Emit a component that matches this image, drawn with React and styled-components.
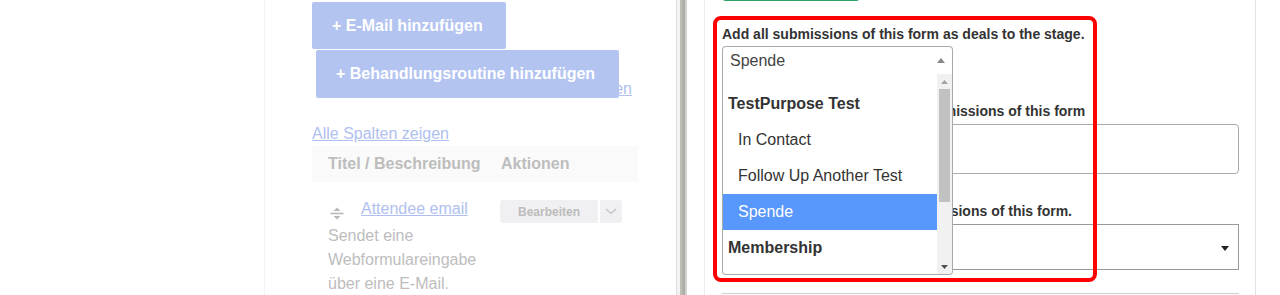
import React from 'react'
import styled, { createGlobalStyle } from 'styled-components'

const GlobalStyle = createGlobalStyle`
  html, body {
    margin: 0;
    padding: 0;
    background: #fff;
  }
  body {
    font-family: "Liberation Sans", Arial, sans-serif;
    overflow: hidden;
  }
`

const stages = [
  { label: 'TestPurpose Test', group: true },
  { label: 'In Contact' },
  { label: 'Follow Up Another Test' },
  { label: 'Spende', active: true },
  { label: 'Membership', group: true },
]

export default function App() {
  return (
    <>
      <GlobalStyle />
      <Page>
        <Gutter />
        <LeftPanel>
          <GhostButton>+ E-Mail hinzufügen</GhostButton>
          <LinkRow>
            <FadedLink href="#">Vorlage hinzufügen</FadedLink>
            <DraggedButton>+ Behandlungsroutine hinzufügen</DraggedButton>
          </LinkRow>
          <ColumnsLink href="#">Alle Spalten zeigen</ColumnsLink>
          <TableHead>
            <TitleCell>Titel / Beschreibung</TitleCell>
            <ActionCell>Aktionen</ActionCell>
          </TableHead>
          <TableRow>
            <TitleCell>
              <TitleLine>
                <SortIcon />
                <TitleLink href="#">Attendee email</TitleLink>
              </TitleLine>
              <Description>Sendet eine Webformulareingabe über eine E-Mail.</Description>
            </TitleCell>
            <ActionCell>
              <SplitButton>
                <EditButton>Bearbeiten</EditButton>
                <CaretButton>
                  <svg width="12" height="7" viewBox="0 0 12 7">
                    <path d="M1 1l5 4.5L11 1" fill="none" stroke="#c6c6c8" strokeWidth="1.5" />
                  </svg>
                </CaretButton>
              </SplitButton>
            </ActionCell>
          </TableRow>
        </LeftPanel>

        <Divider>
          <DividerEdge />
          <DividerGap />
          <DividerBar />
          <DividerShade />
        </Divider>

        <RightPanel>
          <SaveButton />
          <Field $first>
            <Label>Add all submissions of this form as deals to the stage.</Label>
            <OpenSelect>
              Spende
              <ArrowUp />
            </OpenSelect>
          </Field>
          <Field>
            <Label>Add the contact person of all submissions of this form</Label>
            <TextBox />
          </Field>
          <Field>
            <Label>Add the organization of all submissions of this form.</Label>
            <PlainSelect>
              <ArrowDown />
            </PlainSelect>
          </Field>
          <NextField />

          <Dropdown>
            <OptionList>
              {stages.map((s) => (
                <Option key={s.label} $group={s.group} $active={s.active}>
                  {s.label}
                </Option>
              ))}
            </OptionList>
            <Scrollbar>
              <ScrollArrow>
                <svg width="7" height="4" viewBox="0 0 7 4">
                  <path d="M0 4L3.5 0L7 4z" fill="#a3a3a3" />
                </svg>
              </ScrollArrow>
              <Thumb />
              <ScrollArrow $bottom>
                <svg width="7" height="4" viewBox="0 0 7 4">
                  <path d="M0 0L7 0L3.5 4z" fill="#505050" />
                </svg>
              </ScrollArrow>
            </Scrollbar>
          </Dropdown>

          <Highlight />
        </RightPanel>
      </Page>
    </>
  )
}

function SortIcon() {
  return (
    <SortSvg width="14" height="13" viewBox="0 0 14 13">
      <path d="M3.5 4L7 0.5L10.5 4z" fill="#b8b8b8" />
      <path d="M0.5 6.5H13.5" stroke="#b8b8b8" strokeWidth="1.6" />
      <path d="M3.5 9L10.5 9L7 12.5z" fill="#b8b8b8" />
    </SortSvg>
  )
}

const Page = styled.div`
  display: flex;
  height: 295px;
  overflow: hidden;
  background: #fff;
`

const Gutter = styled.div`
  width: 264px;
  flex-shrink: 0;
`

const LeftPanel = styled.div`
  width: 412px;
  flex-shrink: 0;
  box-sizing: border-box;
  border-left: 1px solid #f3f3f3;
  padding: 2px 38px 0 47px;
`

const GhostButton = styled.div`
  display: inline-block;
  height: 47px;
  line-height: 47px;
  padding: 0 23px 0 20px;
  border-radius: 2px;
  background: #b3c4f0;
  color: #fff;
  font-size: 16px;
  font-weight: bold;
  white-space: nowrap;
`

const LinkRow = styled.div`
  position: relative;
  height: 48px;
  margin-top: 1px;
  display: flex;
  justify-content: flex-end;
  align-items: flex-end;
  padding-right: 6px;
`

const DraggedButton = styled(GhostButton)`
  position: absolute;
  left: 4px;
  top: 0;
  height: 48px;
  line-height: 48px;
  padding: 0 24px 0 20px;
`

const FadedLink = styled.a`
  color: #afc0f0;
  font-size: 16px;
  line-height: 18px;
  text-decoration: underline;
`

const TitleLink = styled(FadedLink)`
  line-height: 24px;
`

const ColumnsLink = styled(FadedLink)`
  display: block;
  width: max-content;
  margin-top: 27px;
`

const TableHead = styled.div`
  display: flex;
  align-items: center;
  height: 36px;
  margin-top: 3px;
  background: #fafafa;
  color: #bdbdbd;
  font-size: 16px;
  font-weight: bold;
`

const TitleCell = styled.div`
  width: 189px;
  flex-shrink: 0;
  box-sizing: border-box;
  padding-left: 16px;
  padding-right: 10px;
`

const ActionCell = styled.div`
  flex: 1;
`

const TableRow = styled.div`
  display: flex;
  align-items: flex-start;
  padding-top: 15px;
`

const TitleLine = styled.div`
  display: flex;
  align-items: flex-start;
  height: 24px;
`

const SortSvg = styled.svg`
  flex-shrink: 0;
  margin: 10px 17px 0 2px;
`

const Description = styled.div`
  margin-top: 3px;
  color: #bdbdbd;
  font-size: 16px;
  line-height: 24px;
`

const SplitButton = styled.div`
  display: flex;
  margin-top: 3px;
  margin-left: -1px;
  height: 23px;
`

const EditButton = styled.div`
  width: 98px;
  display: flex;
  align-items: center;
  justify-content: center;
  background: #f0f0f2;
  border-radius: 3px 0 0 3px;
  color: #bcbcbc;
  font-size: 12px;
  font-weight: bold;
`

const CaretButton = styled.div`
  width: 22px;
  margin-left: 2px;
  display: flex;
  align-items: center;
  justify-content: center;
  background: #f0f0f2;
  border-radius: 0 3px 3px 0;
`

const Divider = styled.div`
  width: 28px;
  flex-shrink: 0;
  display: flex;
`

const DividerEdge = styled.div`
  width: 1px;
  background: #dcdcdc;
`

const DividerGap = styled.div`
  width: 3px;
  background: #f3f3f3;
`

const DividerBar = styled.div`
  width: 5px;
  background: linear-gradient(to right, #c2c2ba, #a8a8a2);
`

const DividerShade = styled.div`
  width: 2px;
  background: #d2d2cc;
`

const RightPanel = styled.div`
  position: relative;
  width: 552px;
  flex-shrink: 0;
  box-sizing: border-box;
  border-left: 1px solid #ececec;
  border-right: 1px solid #e2e2e2;
  padding: 0 16px 0 17px;
`

const SaveButton = styled.div`
  width: 138px;
  height: 30px;
  margin-top: -29px;
  border-radius: 4px;
  background: #2aa464;
`

const Field = styled.div`
  margin-top: ${(p) => (p.$first ? '23px' : '27px')};
`

const Label = styled.label`
  display: block;
  color: #333;
  font-size: 14px;
  font-weight: bold;
  line-height: 20px;
  white-space: nowrap;
`

const OpenSelect = styled.div`
  position: relative;
  width: 231px;
  height: 28px;
  margin-top: 2px;
  box-sizing: border-box;
  border: 1px solid #aaa;
  border-bottom: none;
  border-radius: 4px 4px 0 0;
  padding-left: 7px;
  color: #444;
  font-size: 16px;
  line-height: 27px;
`

const ArrowUp = styled.span`
  position: absolute;
  right: 7px;
  top: 11px;
  border-left: 4px solid transparent;
  border-right: 4px solid transparent;
  border-bottom: 5px solid #888;
`

const TextBox = styled.div`
  height: 50px;
  margin-top: 3px;
  box-sizing: border-box;
  border: 1px solid #aaa;
  border-radius: 4px;
`

const PlainSelect = styled.div`
  position: relative;
  height: 46px;
  margin-top: 3px;
  box-sizing: border-box;
  border: 1px solid #999;
`

const ArrowDown = styled.span`
  position: absolute;
  right: 9px;
  top: 21px;
  border-left: 4px solid transparent;
  border-right: 4px solid transparent;
  border-top: 5px solid #222;
`

const NextField = styled.div`
  height: 20px;
  margin-top: 23px;
  border-top: 1px solid #d0d0d0;
`

const Dropdown = styled.div`
  position: absolute;
  left: 17px;
  top: 74px;
  width: 231px;
  height: 201px;
  box-sizing: border-box;
  display: flex;
  background: #fff;
  border: 1px solid #aaa;
  border-top: none;
  border-radius: 0 0 4px 4px;
  overflow: hidden;
`

const OptionList = styled.div`
  flex: 1;
  padding-top: 12px;
`

const Option = styled.div`
  height: 36px;
  line-height: 36px;
  padding-left: ${(p) => (p.$group ? '5px' : '15px')};
  background: ${(p) => (p.$active ? '#5897fb' : 'transparent')};
  color: ${(p) => (p.$active ? '#fff' : '#333')};
  font-size: 16px;
  font-weight: ${(p) => (p.$group ? 'bold' : 'normal')};
  white-space: nowrap;
`

const Scrollbar = styled.div`
  width: 15px;
  display: flex;
  flex-direction: column;
  background: #f1f1f1;
`

const ScrollArrow = styled.div`
  height: 15px;
  display: flex;
  align-items: center;
  justify-content: center;
  margin-top: ${(p) => (p.$bottom ? 'auto' : '0')};
`

const Thumb = styled.div`
  height: 113px;
  margin: 0 2px 0 2px;
  background: #c1c1c1;
`

const Highlight = styled.div`
  position: absolute;
  left: 8px;
  top: 16px;
  width: 384px;
  height: 266px;
  box-sizing: border-box;
  border: 4px solid #f00;
  border-radius: 8px;
  pointer-events: none;
`
